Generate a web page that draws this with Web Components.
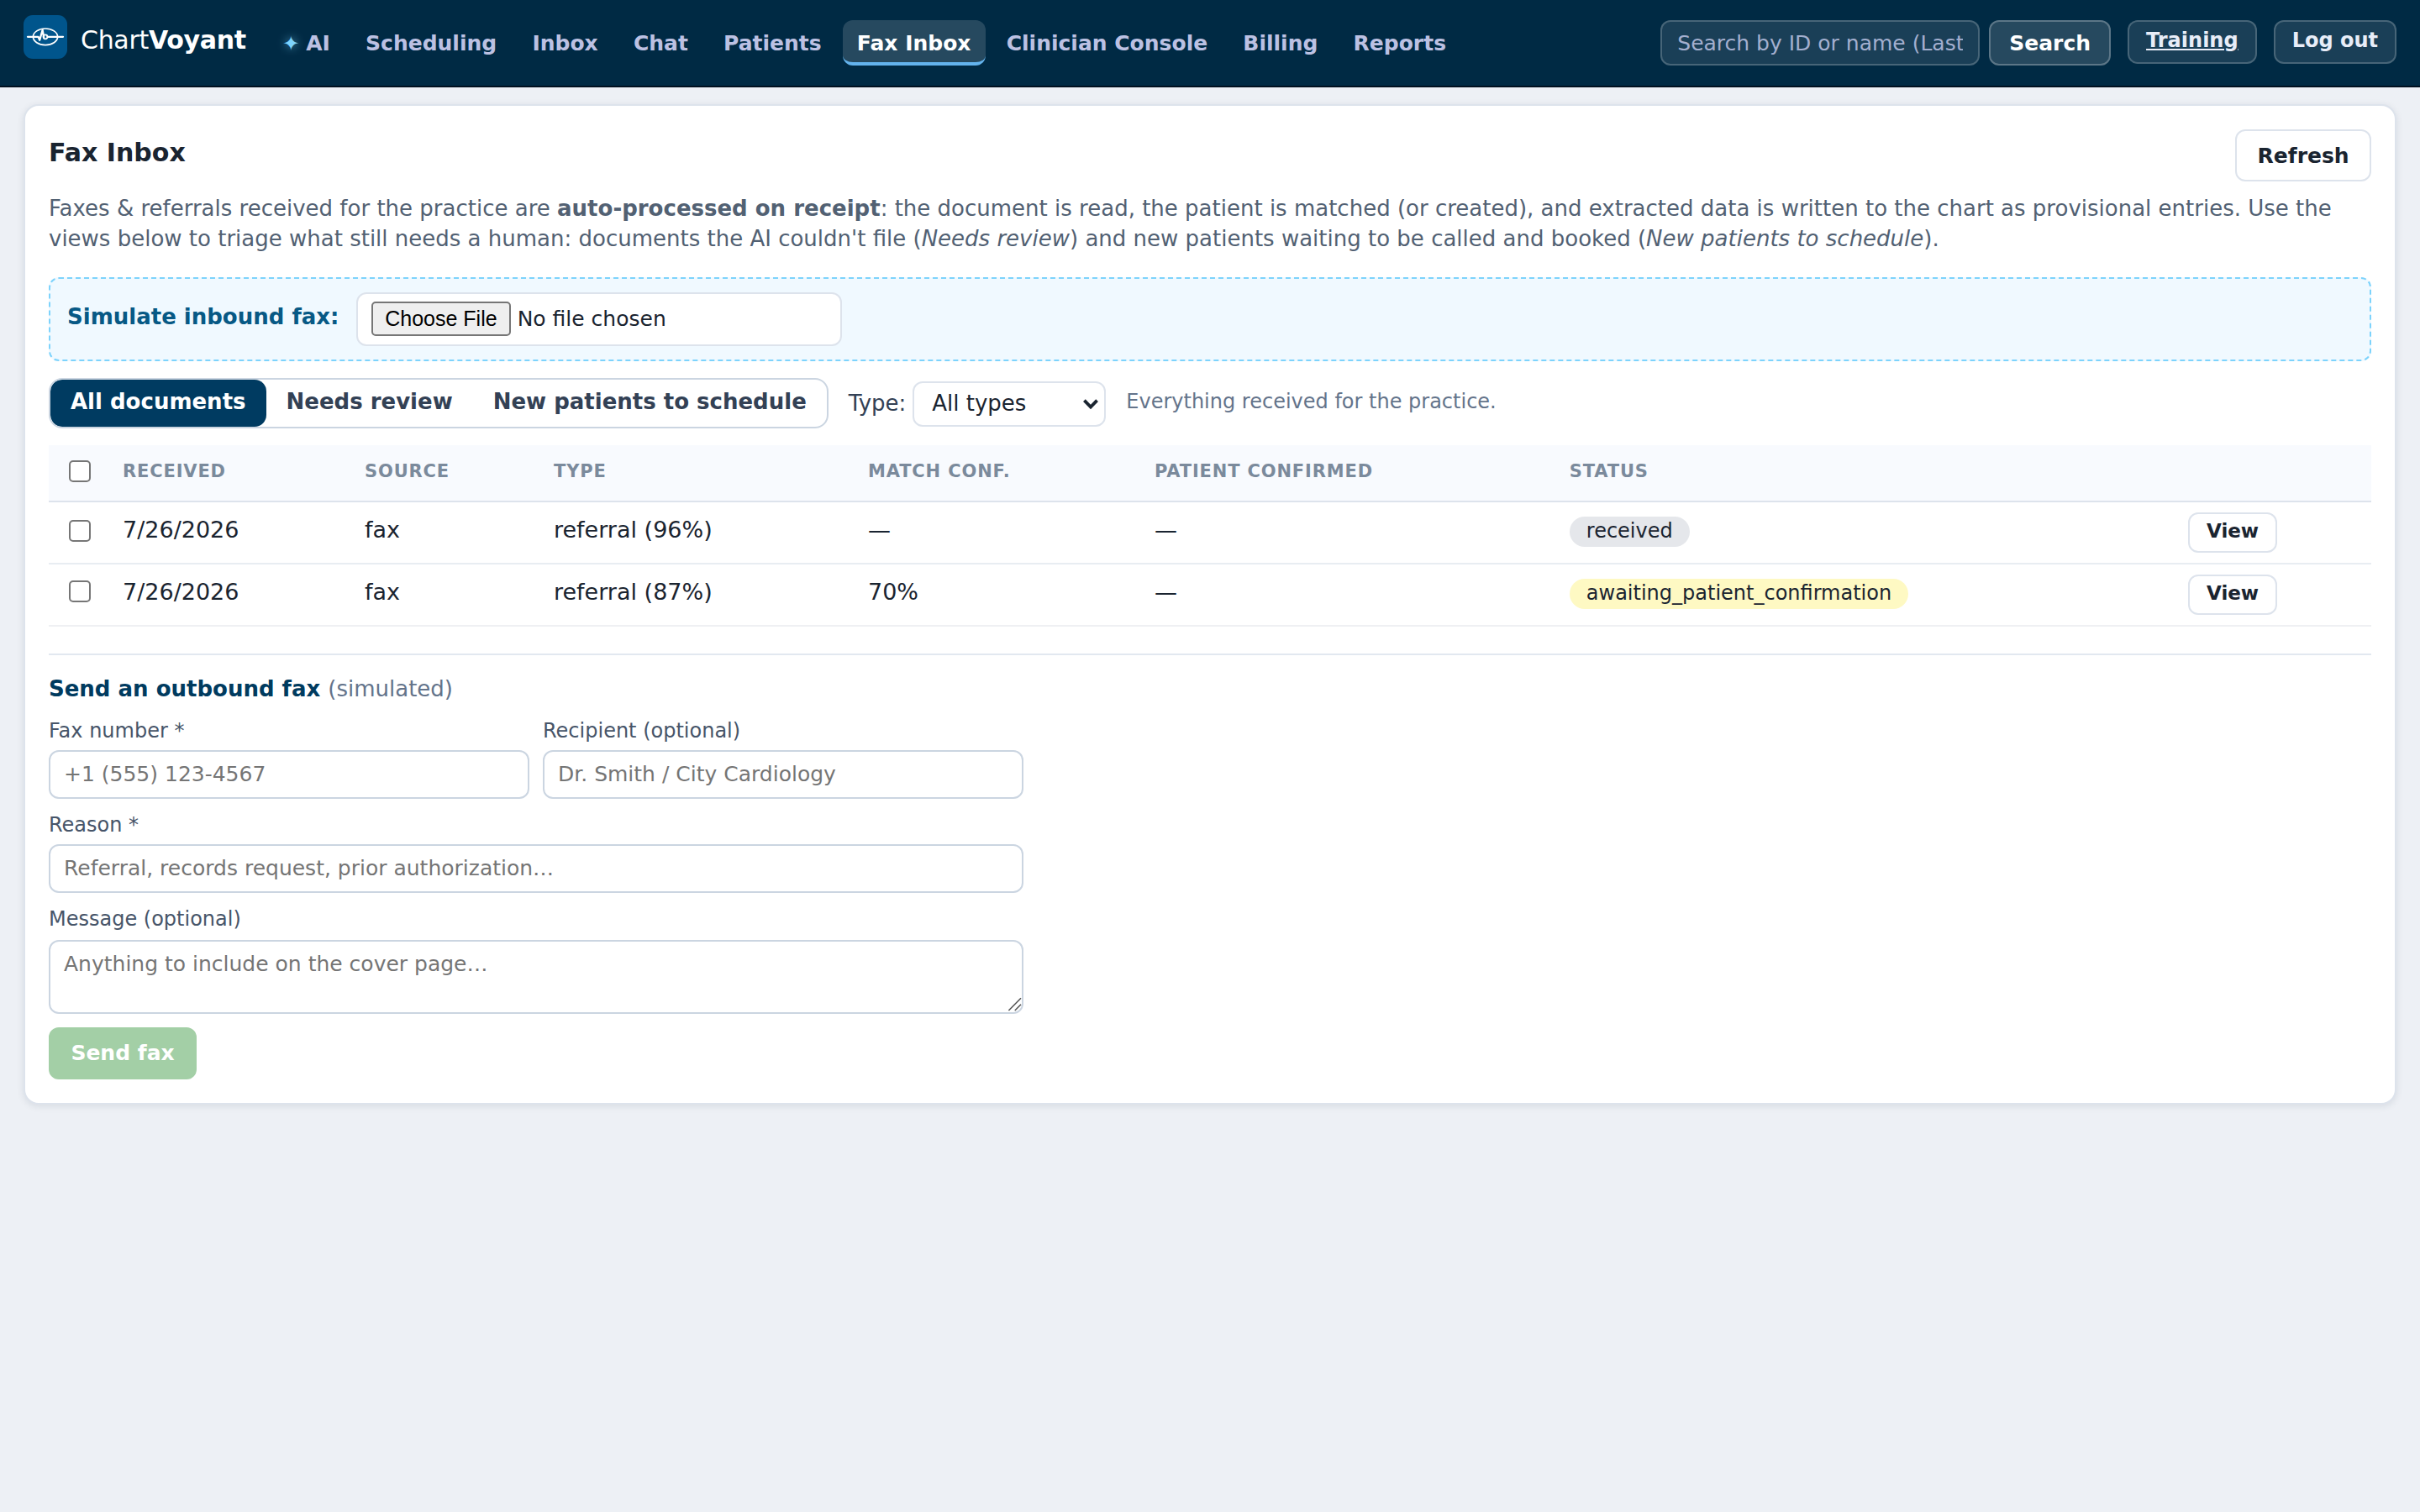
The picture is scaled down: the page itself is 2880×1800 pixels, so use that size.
<!DOCTYPE html>
<html lang="en">
<head>
<meta charset="utf-8">
<title>ChartVoyant – Fax Inbox</title>
<style>
	:root {
		--navy: #002a44;
		--navy-2: #003b5f;
		--line: #dde3ec;
		--line-2: #cbd5e1;
		--ink: #1a2430;
		--muted: #64748b;
		zoom: 2;
	}

	body {
		margin: 0;
		background: #edf0f5;
		color: var(--ink);
		font: 13px/1.4 "DejaVu Sans", sans-serif;
	}

	main {
		padding: 10px 14px;
	}
</style>
</head>
<body>

<app-header>
	<app-brand slot="brand"></app-brand>
	<nav-link spark>AI</nav-link>
	<nav-link>Scheduling</nav-link>
	<nav-link>Inbox</nav-link>
	<nav-link>Chat</nav-link>
	<nav-link>Patients</nav-link>
	<nav-link active>Fax Inbox</nav-link>
	<nav-link>Clinician Console</nav-link>
	<nav-link>Billing</nav-link>
	<nav-link>Reports</nav-link>
	<patient-search slot="tools"></patient-search>
	<header-action slot="tools" underline>Training</header-action>
	<header-action slot="tools">Log out</header-action>
</app-header>

<main>
	<fax-card>
		<span slot="title">Fax Inbox</span>
		<app-button slot="action">Refresh</app-button>
		<span slot="intro">Faxes &amp; referrals received for the practice are <b>auto-processed on receipt</b>: the document is read, the patient is matched (or created), and extracted data is written to the chart as provisional entries. Use the views below to triage what still needs a human: documents the AI couldn't file (<em>Needs review</em>) and new patients waiting to be called and booked (<em>New patients to schedule</em>).</span>
		<fax-simulator>Simulate inbound fax:</fax-simulator>
		<fax-filters></fax-filters>
		<fax-table></fax-table>
		<outbound-fax></outbound-fax>
	</fax-card>
</main>

<script>
class BaseElement extends HTMLElement {
	connectedCallback() {
		if (this.shadowRoot) return;
		this.attachShadow({ mode: 'open' });
		this.shadowRoot.innerHTML = `
			<style>*, ::before, ::after { box-sizing: border-box; }</style>
			${this.render()}
		`;
	}
}

customElements.define('app-header', class extends BaseElement {
	render() {
		return `
      <style>
        :host {
          display: flex;
          align-items: flex-start;
          box-sizing: border-box;
          height: 52px;
          padding: 0 14px;
          background: var(--navy);
          border-bottom: 1px solid #001020;
        }
        nav {
          display: flex;
          gap: 3.8px;
          margin: 12px 0 0 13px;
        }
        .tools {
          display: flex;
          gap: 10px;
          margin: 12px 0 0 auto;
        }
      </style>
      <slot name="brand"></slot>
      <nav><slot></slot></nav>
      <div class="tools"><slot name="tools"></slot></div>
    `;
	}
});

customElements.define('app-brand', class extends BaseElement {
	render() {
		return `
      <style>
        :host {
          display: flex;
          gap: 8px;
          margin-top: 9px;
          color: #fff;
          font-size: 15px;
          line-height: 18px;
          letter-spacing: -0.01em;
          white-space: nowrap;
        }
        svg {
          width: 26px;
          height: 26px;
        }
        span {
          padding-top: 6px;
        }
      </style>
      <svg viewBox="0 0 52 52" fill="none" stroke="#fff" stroke-linecap="round" stroke-linejoin="round">
        <rect width="52" height="52" rx="11" fill="#00558c" stroke="none"/>
        <ellipse cx="26" cy="25.8" rx="14.6" ry="9.8" stroke-width="1.7"/>
        <path d="M5 25.8H17.5L19.2 29.8L22.6 17.8L24.2 26.5M28.5 25.8H47" stroke-width="2.3"/>
        <circle cx="26" cy="25.8" r="2.5" stroke-width="1.7"/>
      </svg>
      <span>Chart<b>Voyant</b></span>
    `;
	}
});

customElements.define('nav-link', class extends BaseElement {
	render() {
		return `
      <style>
        :host {
          display: block;
          box-sizing: border-box;
          height: 27px;
          padding: 5px 8.65px 0;
          border-bottom: 2px solid transparent;
          border-radius: 6px;
          color: #bcc1e3;
          font-size: 12.5px;
          font-weight: 600;
          line-height: 18px;
          white-space: nowrap;
        }
        :host([active]) {
          background: rgb(255 255 255 / 15%);
          border-color: #63b3ed;
          color: #fff;
        }
        .spark {
          margin-right: 4px;
          color: #7dd3fc;
          font-size: 12px;
          font-weight: 400;
          line-height: 1;
          text-shadow: 0 0 6px rgb(125 211 252 / 70%);
        }
      </style>
      ${this.hasAttribute('spark') ? '<span class="spark">✦</span>' : ''}<slot></slot>
    `;
	}
});

customElements.define('patient-search', class extends BaseElement {
	render() {
		return `
      <style>
        :host {
          display: flex;
          gap: 5.5px;
        }
        input,
        button {
          height: 27px;
          border: 1px solid rgb(255 255 255 / 20%);
          border-radius: 6px;
          background: rgb(255 255 255 / 10%);
          color: #fff;
          font: 12.5px "DejaVu Sans", sans-serif;
        }
        input {
          width: 190px;
          padding: 0 9px;
        }
        input::placeholder {
          color: #a3afcf;
        }
        button {
          padding: 0 11px;
          background: rgb(255 255 255 / 15%);
          border-color: rgb(255 255 255 / 25%);
          font-weight: 600;
        }
      </style>
      <input type="text" placeholder="Search by ID or name (Last, First)">
      <button>Search</button>
    `;
	}
});

customElements.define('header-action', class extends BaseElement {
	render() {
		return `
      <style>
        :host {
          display: block;
          box-sizing: border-box;
          height: 26px;
          padding: 2px 10px 0;
          border: 1px solid rgb(255 255 255 / 20%);
          border-radius: 6px;
          background: rgb(255 255 255 / 10%);
          color: #e8edf8;
          font-size: 12px;
          font-weight: 600;
          line-height: 18px;
          white-space: nowrap;
        }
        :host([underline]) {
          text-decoration: underline;
        }
      </style>
      <slot></slot>
    `;
	}
});

customElements.define('app-button', class extends BaseElement {
	render() {
		return `
      <style>
        :host {
          display: inline-block;
        }
        button {
          display: block;
          height: 31px;
          padding: 0 12.2px;
          border: 1px solid var(--line);
          border-radius: 6px;
          background: #fff;
          color: var(--ink);
          font: 600 12.5px "DejaVu Sans", sans-serif;
        }
        :host([small]) button {
          height: 24px;
          padding: 0 10px 2px;
          font-size: 11.5px;
        }
        :host([primary]) button {
          background: #a3cfa6;
          border-color: #a3cfa6;
          color: #fff;
        }
      </style>
      <button><slot></slot></button>
    `;
	}
});

customElements.define('fax-card', class extends BaseElement {
	render() {
		return `
      <style>
        :host {
          display: block;
          padding: 14px;
          border: 1px solid var(--line);
          border-radius: 9px;
          background: #fff;
          box-shadow: 0 1px 4px rgb(15 35 60 / 10%);
        }
        header {
          display: flex;
          justify-content: space-between;
        }
        h2 {
          margin: 5px 0 0;
          font-size: 15px;
          line-height: 18px;
        }
        p {
          margin: 7px 0 13.6px;
          color: #526173;
          line-height: 18.2px;
        }
      </style>
      <header>
        <h2><slot name="title"></slot></h2>
        <slot name="action"></slot>
      </header>
      <p><slot name="intro"></slot></p>
      <slot></slot>
    `;
	}
});

customElements.define('fax-simulator', class extends BaseElement {
	render() {
		return `
      <style>
        :host {
          display: flex;
          align-items: center;
          gap: 10.4px;
          box-sizing: border-box;
          height: 50px;
          padding: 0 10px;
          border: 1px dashed #7dd3fc;
          border-radius: 6px;
          background: #f0f9ff;
        }
        label {
          padding-bottom: 3px;
          color: #075985;
          font-weight: 600;
        }
        input {
          width: 289px;
          height: 32px;
          padding: 4.5px 8px;
          border: 1px solid var(--line);
          border-radius: 6px;
          background: #fff;
          color: var(--ink);
          font: 12.5px "DejaVu Sans", sans-serif;
        }
      </style>
      <label><slot></slot></label>
      <input type="file">
    `;
	}
});

customElements.define('fax-filters', class extends BaseElement {
	render() {
		return `
      <style>
        :host {
          display: flex;
          align-items: center;
          gap: 12px;
          margin: 10px 0;
        }
        .tabs {
          display: flex;
          height: 30px;
          border: 1px solid var(--line-2);
          border-radius: 8px;
          overflow: hidden;
        }
        button {
          padding: 0 12px 2.5px;
          border: 0;
          border-radius: 7px;
          background: none;
          color: #334155;
          font: 600 13px "DejaVu Sans", sans-serif;
        }
        button[aria-selected=true] {
          background: #003b61;
          color: #fff;
        }
        label {
          display: flex;
          align-items: center;
          gap: 4px;
          padding-top: 1px;
          color: #334155;
        }
        .text {
          padding-bottom: 1px;
        }
        .select {
          display: grid;
          grid-template-areas: "box";
          align-items: center;
        }
        .select > * {
          grid-area: box;
        }
        select {
          appearance: none;
          width: 115px;
          height: 27px;
          padding: 0 10.5px 1px;
          border: 1px solid var(--line);
          border-radius: 6px;
          background: #fff;
          color: var(--ink);
          font: 13px "DejaVu Sans", sans-serif;
        }
        svg {
          justify-self: end;
          width: 10px;
          height: 7px;
          margin-right: 4px;
          pointer-events: none;
        }
        .hint {
          padding-bottom: 1.4px;
          color: var(--muted);
          font-size: 12px;
        }
      </style>
      <div class="tabs" role="tablist">
        <button role="tab" aria-selected="true">All documents</button>
        <button role="tab">Needs review</button>
        <button role="tab">New patients to schedule</button>
      </div>
      <label>
        <span class="text">Type:</span>
        <span class="select">
          <select><option>All types</option></select>
          <svg viewBox="0 0 10 7"><path d="M1.2 1.3L5 5.3L8.8 1.3" fill="none" stroke="#1a2430" stroke-width="1.9"/></svg>
        </span>
      </label>
      <span class="hint">Everything received for the practice.</span>
    `;
	}
});

customElements.define('status-pill', class extends BaseElement {
	render() {
		return `
      <style>
        :host {
          display: inline-block;
          box-sizing: border-box;
          height: 18px;
          padding: 0 10px;
          border-radius: 9px;
          background: #e5e7eb;
          font-size: 12px;
          line-height: 17.5px;
        }
        :host([tone=warn]) {
          background: #fef9c3;
        }
      </style>
      <slot></slot>
    `;
	}
});

const faxes = [
	{ received: '7/26/2026', source: 'fax', type: 'referral (96%)', match: '—', confirmed: '—', status: 'received', tone: '' },
	{ received: '7/26/2026', source: 'fax', type: 'referral (87%)', match: '70%', confirmed: '—', status: 'awaiting_patient_confirmation', tone: 'warn' },
];

customElements.define('fax-table', class extends BaseElement {
	render() {
		const rows = faxes.map((fax) => `
      <tr>
        <td><input type="checkbox"></td>
        <td>${fax.received}</td>
        <td>${fax.source}</td>
        <td>${fax.type}</td>
        <td>${fax.match}</td>
        <td>${fax.confirmed}</td>
        <td><status-pill tone="${fax.tone}">${fax.status}</status-pill></td>
        <td><app-button small>View</app-button></td>
      </tr>
    `).join('');

		return `
      <style>
        :host {
          display: block;
        }
        table {
          width: 100%;
          table-layout: fixed;
          border-collapse: separate;
          border-spacing: 0;
          font-size: 13.5px;
        }
        th,
        td {
          padding: 6px 8px 0;
          text-align: left;
          vertical-align: baseline;
          line-height: 18px;
          white-space: nowrap;
        }
        th {
          height: 34px;
          padding-top: 6.6px;
          background: #f8fafe;
          border-bottom: 1px solid var(--line);
          color: #7b8a9c;
          font-size: 10.5px;
          letter-spacing: 0.04em;
          text-transform: uppercase;
        }
        td {
          height: 37px;
          border-bottom: 1px solid #e8edf2;
        }
        tr:last-child td {
          border-color: #eff0f3;
        }
        input {
          width: 13px;
          height: 13px;
          margin: 2.5px 3px 3.5px 4px;
          vertical-align: middle;
        }
        tr:last-child td input {
          margin-block: 1.5px 4.5px;
        }
      </style>
      <table>
        <colgroup>
          <col style="width:36px"><col style="width:144px"><col style="width:112.5px"><col style="width:187px">
          <col style="width:170.5px"><col style="width:246.9px"><col style="width:368.1px"><col>
        </colgroup>
        <thead>
          <tr>
            <th><input type="checkbox"></th>
            <th>Received</th>
            <th>Source</th>
            <th>Type</th>
            <th>Match conf.</th>
            <th>Patient confirmed</th>
            <th>Status</th>
            <th></th>
          </tr>
        </thead>
        <tbody>${rows}</tbody>
      </table>
    `;
	}
});

customElements.define('form-field', class extends BaseElement {
	render() {
		const hint = this.getAttribute('placeholder');
		const control = this.hasAttribute('multiline')
			? `<div class="area">
          <textarea placeholder="${hint}"></textarea>
          <svg viewBox="0 0 10 10" stroke="#555" stroke-width=".8"><path d="M1.2 8L8.5 .6M4.9 8L8.5 4.4"/></svg>
        </div>`
			: `<input type="text" placeholder="${hint}">`;

		return `
      <style>
        :host {
          display: block;
        }
        label {
          display: block;
          margin-bottom: 3px;
          color: #475569;
          font-size: 12px;
          line-height: 17px;
        }
        input,
        textarea {
          display: block;
          width: 100%;
          height: 29px;
          padding: 0 8px;
          border: 1px solid var(--line-2);
          border-radius: 6px;
          background: #fff;
          color: var(--ink);
          font: 12.5px "DejaVu Sans", sans-serif;
        }
        textarea {
          height: 44px;
          padding: 6px 8px;
          resize: none;
        }
        :host([multiline]) label {
          margin-bottom: 4px;
        }
        .area {
          position: relative;
        }
        /* resize grip, drawn over the corner */
        svg {
          position: absolute;
          right: 0;
          bottom: 0;
          width: 10px;
          height: 10px;
          pointer-events: none;
        }
      </style>
      <label><slot></slot></label>
      ${control}
    `;
	}
});

customElements.define('outbound-fax', class extends BaseElement {
	render() {
		return `
      <style>
        :host {
          display: block;
          margin-top: 16px;
          padding-top: 11px;
          border-top: 1px solid #e2e8f0;
        }
        h3 {
          margin: 0 0 7.4px;
          color: var(--navy-2);
          font-size: 13px;
          line-height: 18px;
        }
        h3 span {
          color: var(--muted);
          font-weight: 400;
        }
        form {
          display: grid;
          grid-template-columns: 1fr 1fr;
          gap: 7px 8px;
          width: 580px;
        }
        .wide {
          grid-column: 1 / -1;
        }
        app-button {
          justify-self: start;
          margin-top: 1px;
        }
      </style>
      <h3>Send an outbound fax <span>(simulated)</span></h3>
      <form>
        <form-field placeholder="+1 (555) 123-4567">Fax number *</form-field>
        <form-field placeholder="Dr. Smith / City Cardiology">Recipient (optional)</form-field>
        <form-field class="wide" placeholder="Referral, records request, prior authorization…">Reason *</form-field>
        <form-field class="wide" multiline placeholder="Anything to include on the cover page…">Message (optional)</form-field>
        <app-button class="wide" primary>Send fax</app-button>
      </form>
    `;
	}
});
</script>
</body>
</html>
